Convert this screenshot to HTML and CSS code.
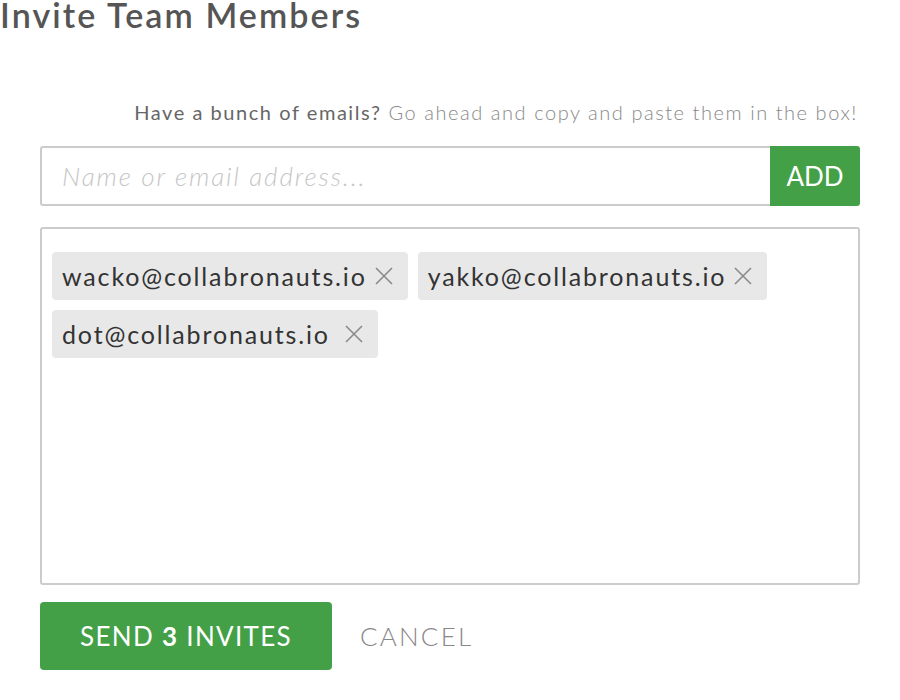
FILE: index.html
```html
<!DOCTYPE html>
<html>
<head>
<meta charset="utf-8">
<link rel="stylesheet" href="styles.css">
</head>
<body>
<div class="page">
  <h1 class="title">Invite Team Members</h1>
  <div class="form">
    <p class="hint"><span class="hint-strong">Have a bunch of emails?</span> Go ahead and copy and paste them in the box!</p>
    <div class="input-row">
      <div class="input"><span class="placeholder">Name or email address...</span></div>
      <button class="add">ADD</button>
    </div>
    <div class="tags-box">
      <span class="tag"><span class="tag-text">wacko@collabronauts.io</span><svg class="x" viewBox="0 0 18 18" width="18" height="18"><path d="M1 1L17 17M17 1L1 17" stroke="#8a8a8a" stroke-width="1.6" fill="none"/></svg></span>
      <span class="tag"><span class="tag-text">yakko@collabronauts.io</span><svg class="x" viewBox="0 0 18 18" width="18" height="18"><path d="M1 1L17 17M17 1L1 17" stroke="#8a8a8a" stroke-width="1.6" fill="none"/></svg></span>
      <span class="tag"><span class="tag-text">dot@collabronauts.io</span><svg class="x x-wide" viewBox="0 0 18 18" width="18" height="18"><path d="M1 1L17 17M17 1L1 17" stroke="#8a8a8a" stroke-width="1.6" fill="none"/></svg></span>
    </div>
    <div class="actions">
      <button class="send">SEND <b>3</b> INVITES</button>
      <button class="cancel">CANCEL</button>
    </div>
  </div>
</div>
</body>
</html>
```
FILE: styles.css
```css
html, body {
  margin: 0;
  padding: 0;
  background: #fff;
}
body {
  font-family: Lato, "Open Sans", sans-serif;
  color: #333;
}
.page {
  width: 900px;
}
.title {
  margin: 0;
  font-size: 34px;
  line-height: 36px;
  font-weight: 600;
  letter-spacing: 2.1px;
  color: #555;
  margin-top: -3px;
}
.form {
  padding: 0 40px;
}
.hint {
  margin: 67px 0 0;
  text-align: right;
  padding-right: 2px;
  font-size: 20px;
  line-height: 24px;
  font-weight: 300;
  letter-spacing: 1.55px;
  color: #888;
}
.hint-strong {
  font-weight: 400;
  color: #666;
}
.input-row {
  display: flex;
  height: 60px;
  margin-top: 22px;
}
.input {
  flex: 1;
  display: flex;
  align-items: center;
  border: 2px solid #ccc;
  border-right: none;
  border-radius: 3px 0 0 3px;
  padding-left: 20px;
}
.placeholder {
  font-size: 26px;
  font-style: italic;
  font-weight: 300;
  letter-spacing: 1.9px;
  color: #c6c6c6;
}
.add {
  width: 90px;
  border: none;
  background: #43a047;
  color: #fff;
  font-family: inherit;
  font-size: 26px;
  font-weight: 400;
  border-radius: 0 3px 3px 0;
  padding: 0;
}
.tags-box {
  margin-top: 21px;
  height: 358px;
  box-sizing: border-box;
  border: 2px solid #ccc;
  border-radius: 3px;
  padding: 23px 10px;
  display: flex;
  flex-wrap: wrap;
  align-content: flex-start;
  gap: 10px;
}
.tag {
  display: inline-flex;
  align-items: center;
  height: 48px;
  background: #e8e8e8;
  border-radius: 4px;
  padding: 0 15px 0 10px;
  font-size: 25px;
  letter-spacing: 1.85px;
  color: #333;
}
.x {
  margin-left: 8px;
}
.x-wide {
  margin-left: 15px;
}
.actions {
  display: flex;
  align-items: center;
  margin-top: 17px;
  gap: 28px;
}
.send {
  height: 68px;
  width: 292px;
  border: none;
  border-radius: 4px;
  background: #43a047;
  color: #fff;
  font-family: inherit;
  font-size: 26px;
  font-weight: 400;
  letter-spacing: 1.3px;
  padding: 0;
}
.send b {
  font-weight: 700;
}
.cancel {
  border: none;
  background: none;
  padding: 0;
  font-family: inherit;
  font-size: 26px;
  font-weight: 300;
  letter-spacing: 2.2px;
  color: #888;
}
```
